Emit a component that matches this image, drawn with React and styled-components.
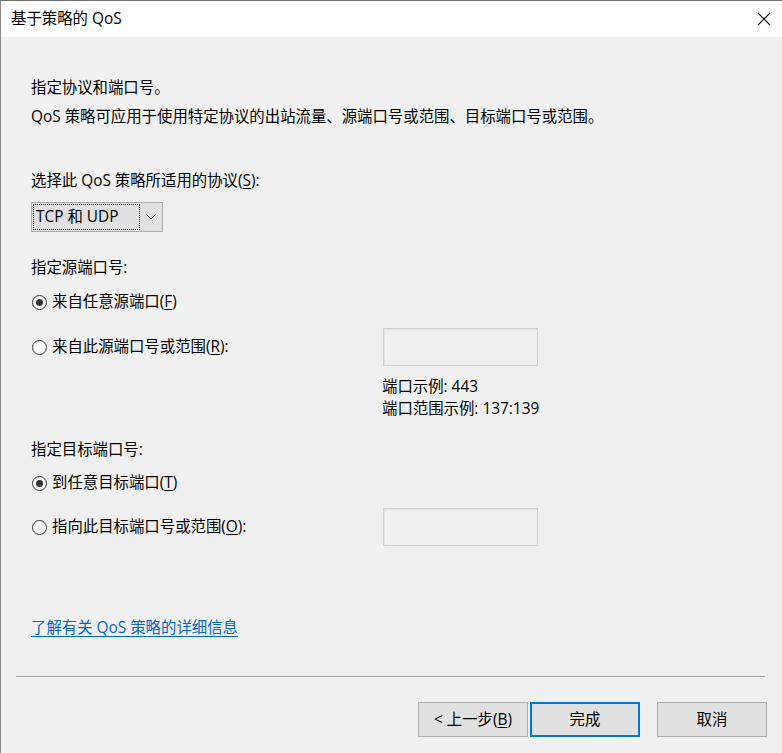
import React from "react";
import styled, { createGlobalStyle } from "styled-components";

const Global = createGlobalStyle`
  html, body { margin: 0; padding: 0; background: #f0f0f0; }
  body { font-family: "Open Sans", "Noto Sans CJK SC", sans-serif; }
`;

const Window = styled.div`
  width: 782px;
  height: 753px;
  box-sizing: border-box;
  border-top: 1px solid #6f6f6f;
  border-left: 1px solid #8a8a8a;
  background: #f0f0f0;
  display: flex;
  flex-direction: column;
  color: #000;
  font-size: 15.4px;
  overflow: hidden;
`;

const TitleBar = styled.div`
  height: 36px;
  flex: none;
  background: #ffffff;
  display: flex;
  align-items: center;
  justify-content: space-between;
  padding-left: 10px;
  padding-right: 11px;
`;

const Title = styled.div`
  font-size: 15.4px;
  line-height: 22px;
`;

const CloseBtn = styled.div`
  width: 14px;
  height: 14px;
  display: flex;
  align-items: center;
  justify-content: center;
`;

const Content = styled.div`
  flex: 1;
  display: flex;
  flex-direction: column;
  padding: 0 0 0 30px;
`;

const Text = styled.div`
  line-height: 22px;
  margin-top: ${(p) => p.$mt || 0}px;
  white-space: nowrap;
`;

const U = styled.span`
  text-decoration: underline;
  text-underline-offset: 2px;
`;

const Select = styled.div`
  margin-top: 10px;
  width: 132px;
  height: 30px;
  box-sizing: border-box;
  border: 1px solid #adadad;
  background: #e1e1e1;
  display: flex;
  align-items: center;
  padding: 0 1px;
`;

const SelectValue = styled.div`
  width: 107px;
  height: 26px;
  box-sizing: border-box;
  border: 1px dotted #222;
  display: flex;
  align-items: center;
  padding-left: 2px;
  line-height: 22px;
`;

const Chevron = styled.div`
  flex: 1;
  display: flex;
  justify-content: center;
  align-items: center;
`;

const RadioRow = styled.div`
  margin-top: ${(p) => p.$mt || 0}px;
  display: flex;
  align-items: center;
  height: ${(p) => (p.$tall ? 38 : 22)}px;
`;

const RadioLabel = styled.div`
  width: 352px;
  display: flex;
  align-items: center;
  line-height: 22px;
  white-space: nowrap;
`;

const RadioCircle = styled.span`
  width: 13px;
  height: 13px;
  border: 1px solid #333;
  border-radius: 50%;
  background: #fff;
  margin-right: 5px;
  margin-left: 1px;
  display: inline-flex;
  align-items: center;
  justify-content: center;
  flex: none;
  &::after {
    content: "";
    width: 7px;
    height: 7px;
    border-radius: 50%;
    background: #333;
    display: ${(p) => (p.$checked ? "block" : "none")};
  }
`;

const Input = styled.div`
  width: 155px;
  height: 38px;
  box-sizing: border-box;
  border: 1px solid #cfcfcf;
  background: #f0f0f0;
  box-shadow: inset 1px 1px 0 #e3e3e3;
`;

const Examples = styled.div`
  margin-top: 10px;
  margin-left: 351px;
  display: flex;
  flex-direction: column;
  line-height: 22px;
`;

const Link = styled.a`
  margin-top: 71px;
  align-self: flex-start;
  color: #0066cc;
  text-decoration: underline;
  text-underline-offset: 3px;
  line-height: 22px;
  cursor: pointer;
`;

const Footer = styled.div`
  display: flex;
  flex-direction: column;
  padding-bottom: 16px;
`;

const Separator = styled.div`
  margin: 0 17px 0 15px;
  height: 1px;
  background: #a0a0a0;
  border-bottom: 1px solid #ffffff;
`;

const ButtonRow = styled.div`
  margin-top: 24px;
  display: flex;
  justify-content: flex-end;
  padding-right: 15px;
`;

const Button = styled.div`
  width: 110px;
  height: 35px;
  box-sizing: border-box;
  background: #e1e1e1;
  border: 1px solid ${(p) => (p.$default ? "#0078d7" : "#adadad")};
  box-shadow: ${(p) => (p.$default ? "inset 0 0 0 1px #0078d7" : "none")};
  display: flex;
  align-items: center;
  justify-content: center;
  font-size: 15.4px;
  line-height: 22px;
  margin-left: ${(p) => p.$ml || 0}px;
`;

export default function App() {
  return (
    <>
      <Global />
      <Window>
        <TitleBar>
          <Title>基于策略的 QoS</Title>
          <CloseBtn>
            <svg width="14" height="14" viewBox="0 0 14 14">
              <path d="M1 1 L13 13 M13 1 L1 13" stroke="#111" strokeWidth="1.1" fill="none" />
            </svg>
          </CloseBtn>
        </TitleBar>
        <Content>
          <Text $mt={40}>指定协议和端口号。</Text>
          <Text $mt={7}>QoS 策略可应用于使用特定协议的出站流量、源端口号或范围、目标端口号或范围。</Text>
          <Text $mt={42}>
            选择此 QoS 策略所适用的协议(<U>S</U>):
          </Text>
          <Select>
            <SelectValue>TCP 和 UDP</SelectValue>
            <Chevron>
              <svg width="10" height="6" viewBox="0 0 10 6">
                <path d="M0.5 0.5 L5 5 L9.5 0.5" stroke="#333" strokeWidth="1" fill="none" />
              </svg>
            </Chevron>
          </Select>
          <Text $mt={25}>指定源端口号:</Text>
          <RadioRow $mt={12}>
            <RadioLabel>
              <RadioCircle $checked />
              来自任意源端口(<U>F</U>)
            </RadioLabel>
          </RadioRow>
          <RadioRow $mt={15} $tall>
            <RadioLabel>
              <RadioCircle />
              来自此源端口号或范围(<U>R</U>):
            </RadioLabel>
            <Input />
          </RadioRow>
          <Examples>
            <span>端口示例: 443</span>
            <span>端口范围示例: 137:139</span>
          </Examples>
          <Text $mt={19}>指定目标端口号:</Text>
          <RadioRow $mt={11}>
            <RadioLabel>
              <RadioCircle $checked />
              到任意目标端口(<U>T</U>)
            </RadioLabel>
          </RadioRow>
          <RadioRow $mt={14} $tall>
            <RadioLabel>
              <RadioCircle />
              指向此目标端口号或范围(<U>O</U>):
            </RadioLabel>
            <Input />
          </RadioRow>
          <Link>了解有关 QoS 策略的详细信息</Link>
        </Content>
        <Footer>
          <Separator />
          <ButtonRow>
            <Button>
              &lt; 上一步(<U>B</U>)
            </Button>
            <Button $default $ml={2}>完成</Button>
            <Button $ml={17}>取消</Button>
          </ButtonRow>
        </Footer>
      </Window>
    </>
  );
}
